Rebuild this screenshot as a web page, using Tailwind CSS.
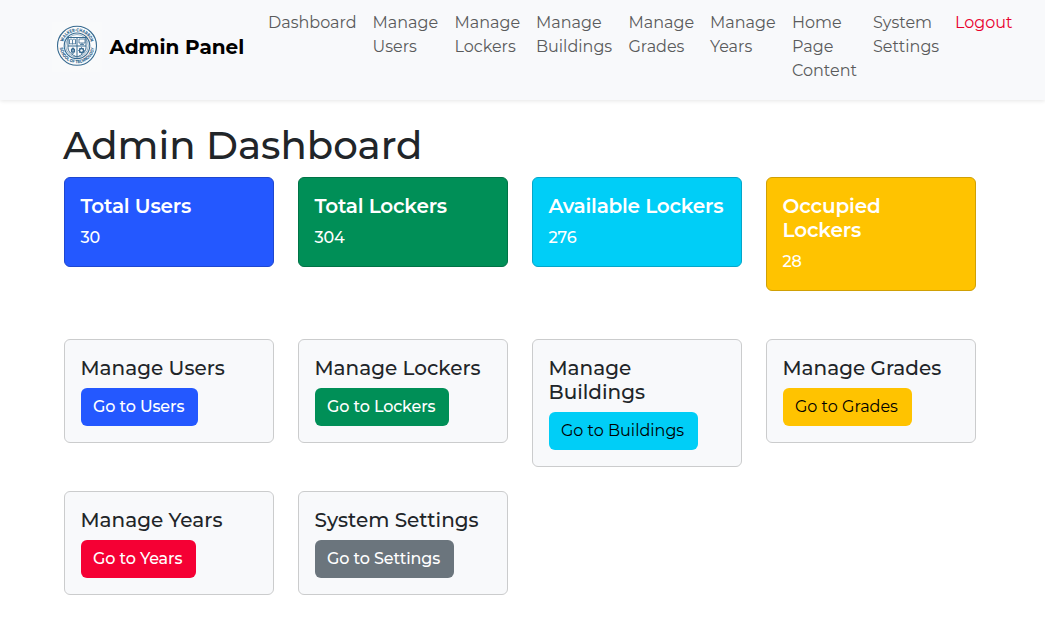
<!DOCTYPE html>
<html lang="en">
<head>
<meta charset="utf-8">
<title>Admin Dashboard</title>
<script src="https://cdn.jsdelivr.net/npm/@tailwindcss/browser@4"></script>
</head>
<body class="min-h-screen overflow-hidden bg-white font-['Montserrat','Inter',sans-serif] text-base text-[#212529]">
<header class="flex h-[99.5px] items-start bg-[#f8f9fb] pl-[52px] shadow-[0_1px_4px_rgba(0,0,0,0.1)]">
  <a class="mt-[22px] flex w-[216px] shrink-0 items-center text-black">
    <svg class="size-[50px] shrink-0" viewBox="0 0 50 50" fill="none" stroke="#376a90">
      <rect width="50" height="50" fill="#f9fafb" stroke="none"/>
      <circle cx="25" cy="23.800" r="19.5" fill="#fafbfc" stroke-width="1.1"/>
      <circle cx="25" cy="23.800" r="12.8" stroke-width="1.1"/>
      <circle cx="25" cy="23.800" r="11.3" stroke-width=".5"/>
      <defs>
        <path id="top" d="M10.700 23.800a14.300 14.300 0 0 1 28.600 0"/>
        <path id="bottom" d="M7.600 23.800a17.400 17.400 0 0 0 34.800 0"/>
      </defs>
      <g fill="#376a90" stroke="none" font-size="4.6" font-weight="800" text-anchor="middle">
        <text textLength="37" lengthAdjust="spacingAndGlyphs"><textPath href="#top" startOffset="50%">WALKER-CHARRON</textPath></text>
        <text textLength="50" lengthAdjust="spacingAndGlyphs"><textPath href="#bottom" startOffset="50%">SCHOOL OF TECHNOLOGY</textPath></text>
      </g>
      <path d="M16 15.500h18v10c0 4.500-4 7.500-9 9.500-5-2-9-5-9-9.500zM25 15.500V35M16 24h18" stroke-width="1"/>
      <path d="M17.500 17.500c1.500-.6 2.500-.3 3 .3.600-.6 1.700-.9 3-.3v4.500c-1.300-.5-2.400-.3-3 .2-.600-.5-1.700-.7-3-.2zM20.500 18v4M27 17h6v4h-6zM30 21v1.500M28 22.500h4" stroke-width=".8"/>
      <path d="M21 26v6M19.500 27.500l1.500-1.500 1.500 1.500v2.500h-3z" stroke-width="1.1"/>
      <circle cx="29.500" cy="28.500" r="2" stroke-width="1.3"/>
      <path d="M29.500 25.200v1.500M29.500 30.300v1.500M26.200 28.500h1.500M31.300 28.500h1.500M27.200 26.200l1 1M31.800 26.200l-1 1M27.200 30.800l1-1M31.800 30.800l-1-1" stroke-width=".8"/>
    </svg>
    <span class="ml-[7.500px] text-xl font-bold whitespace-nowrap">Admin Panel</span>
  </a>
  <nav class="flex pt-[11px] leading-6 text-[#5a5b5c] *:shrink-0">
    <a class="w-[104.5px]">Dashboard</a>
    <a class="w-[82px]">Manage<br>Users</a>
    <a class="w-[81.5px]">Manage<br>Lockers</a>
    <a class="w-[92.5px]">Manage<br>Buildings</a>
    <a class="w-[81.5px]">Manage<br>Grades</a>
    <a class="w-[82px]">Manage<br>Years</a>
    <a class="w-[81px]">Home<br>Page<br>Content</a>
    <a class="w-[82px]">System<br>Settings</a>
    <a class="text-[#e8002e]">Logout</a>
  </nav>
</header>
<main class="w-[976px] pt-[22.5px] pl-16">
  <h1 class="-ml-px mb-[7px] text-[38.7px] leading-[48px] font-medium">Admin Dashboard</h1>
  <section class="grid grid-cols-[repeat(4,210px)] items-start gap-6 font-medium text-white">
    <div class="rounded-md border border-[#1e47d0] bg-[#2458ff] py-4 pl-[15.5px]">
      <h5 class="mb-2 text-xl leading-6 font-semibold tracking-[-.18px]">Total Users</h5>
      <p class="leading-6 tracking-[-.1px]">30</p>
    </div>
    <div class="rounded-md border border-[#007346] bg-[#008f57] py-4 pl-[15.5px]">
      <h5 class="mb-2 text-xl leading-6 font-semibold tracking-[-.2px]">Total Lockers</h5>
      <p class="leading-6 tracking-[-.1px]">304</p>
    </div>
    <div class="rounded-md border border-[#04a6c9] bg-[#00cef7] py-4 pl-[15.5px]">
      <h5 class="mb-2 text-xl leading-6 font-semibold tracking-[-.22px] whitespace-nowrap">Available Lockers</h5>
      <p class="leading-6 tracking-[-.1px]">276</p>
    </div>
    <div class="rounded-md border border-[#d0a005] bg-[#ffc300] py-4 pl-[15.5px]">
      <h5 class="mb-2 text-xl leading-6 font-semibold tracking-[-.15px]">Occupied<br>Lockers</h5>
      <p class="leading-6 tracking-[-.1px]">28</p>
    </div>
  </section>
  <section class="mt-12 grid grid-cols-[repeat(4,210px)] items-start gap-6 whitespace-nowrap">
    <div class="rounded-md border border-[#cbcccd] bg-[#f8f9fb] p-4">
      <h5 class="-ml-[.5px] mb-2 text-xl leading-6 font-medium">Manage Users</h5>
      <a class="flex h-[38px] w-[117px] items-center rounded-md bg-[#2458ff] pl-3 font-medium tracking-[-.12px] text-white">Go to Users</a>
    </div>
    <div class="rounded-md border border-[#cbcccd] bg-[#f8f9fb] p-4">
      <h5 class="-ml-[.5px] mb-2 text-xl leading-6 font-medium">Manage Lockers</h5>
      <a class="flex h-[38px] w-[134px] items-center rounded-md bg-[#008f57] pl-3 font-medium tracking-[-.12px] text-white">Go to Lockers</a>
    </div>
    <div class="rounded-md border border-[#cbcccd] bg-[#f8f9fb] p-4">
      <h5 class="-ml-[.5px] mb-2 text-xl leading-6 font-medium">Manage<br>Buildings</h5>
      <a class="flex h-[38px] w-[149px] items-center rounded-md bg-[#00cef7] pl-3 text-black">Go to Buildings</a>
    </div>
    <div class="rounded-md border border-[#cbcccd] bg-[#f8f9fb] p-4">
      <h5 class="-ml-[.5px] mb-2 text-xl leading-6 font-medium">Manage Grades</h5>
      <a class="flex h-[38px] w-[129px] items-center rounded-md bg-[#ffc300] pl-3 text-black">Go to Grades</a>
    </div>
    <div class="rounded-md border border-[#cbcccd] bg-[#f8f9fb] p-4">
      <h5 class="-ml-[.5px] mb-2 text-xl leading-6 font-medium">Manage Years</h5>
      <a class="flex h-[38px] w-[115px] items-center rounded-md bg-[#f50034] pl-3 font-medium tracking-[-.12px] text-white">Go to Years</a>
    </div>
    <div class="rounded-md border border-[#cbcccd] bg-[#f8f9fb] p-4">
      <h5 class="-ml-[.5px] mb-2 text-xl leading-6 font-medium">System Settings</h5>
      <a class="flex h-[38px] w-[139px] items-center rounded-md bg-[#6b757d] pl-3 font-medium tracking-[-.12px] text-white">Go to Settings</a>
    </div>
  </section>
</main>
</body>
</html>
